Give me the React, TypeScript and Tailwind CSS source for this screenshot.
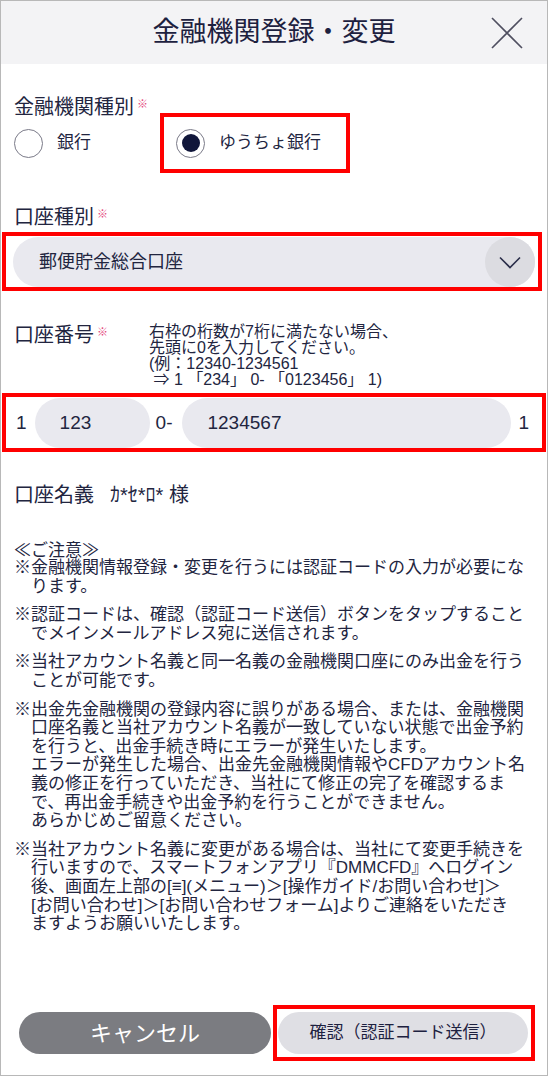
import React from 'react';

const textColor = 'text-[#22253f]';

const Required: React.FC = () => (
  <span className="ml-[3px] align-top text-[11px] leading-[14px] text-[#e4457c]">※</span>
);

const Radio: React.FC<{ checked?: boolean }> = ({ checked }) => (
  <span className="w-[29px] h-[29px] rounded-full border-[1.5px] border-[#7a7a88] bg-white flex items-center justify-center shrink-0">
    {checked && <span className="w-[18px] h-[18px] rounded-full bg-[#10163a]" />}
  </span>
);

const notes: string[][] = [
  ['※金融機関情報登録・変更を行うには認証コードの入力が必要にな', 'ります。'],
  ['※認証コードは、確認（認証コード送信）ボタンをタップすること', 'でメインメールアドレス宛に送信されます。'],
  ['※当社アカウント名義と同一名義の金融機関口座にのみ出金を行う', 'ことが可能です。'],
  [
    '※出金先金融機関の登録内容に誤りがある場合、または、金融機関',
    '口座名義と当社アカウント名義が一致していない状態で出金予約',
    'を行うと、出金手続き時にエラーが発生いたします。',
    'エラーが発生した場合、出金先金融機関情報やCFDアカウント名',
    '義の修正を行っていただき、当社にて修正の完了を確認するま',
    'で、再出金手続きや出金予約を行うことができません。',
    'あらかじめご留意ください。',
  ],
  [
    '※当社アカウント名義に変更がある場合は、当社にて変更手続きを',
    '行いますので、スマートフォンアプリ『DMMCFD』へログイン',
    '後、画面左上部の[≡](メニュー)＞[操作ガイド/お問い合わせ]＞',
    '[お問い合わせ]＞[お問い合わせフォーム]よりご連絡をいただき',
    'ますようお願いいたします。',
  ],
];

const App: React.FC = () => {
  return (
    <div
      className={`w-[548px] h-[1076px] border border-[#b8b8b8] bg-white flex flex-col font-['Liberation_Sans','Noto_Sans_CJK_JP',sans-serif] ${textColor}`}
    >
      {/* Header */}
      <div className="h-[63px] bg-[#f3f3f5] flex items-center justify-between shrink-0">
        <div className="w-[56px]" />
        <h1 className="text-[27px] leading-none text-[#1d213f]">金融機関登録・変更</h1>
        <div className="w-[56px] pr-[24px] flex justify-end">
          <svg width="32" height="32" viewBox="0 0 32 32" fill="none">
            <path d="M1 1 L31 31 M31 1 L1 31" stroke="#4f4f60" strokeWidth="1.6" />
          </svg>
        </div>
      </div>

      <div className="px-[13px] flex flex-col">
        {/* 金融機関種別 */}
        <div className="mt-[33px] text-[20px] leading-[20px]">
          金融機関種別<Required />
        </div>
        <div className="-mt-[4px] h-[60px] flex items-center">
          <div className="w-[146px] flex items-center">
            <Radio />
            <span className="ml-[14px] text-[17px]">銀行</span>
          </div>
          <div className="w-[190px] h-[60px] border-4 border-[#ff0000] flex items-center pl-[12px]">
            <Radio checked />
            <span className="ml-[14px] text-[17px]">ゆうちょ銀行</span>
          </div>
        </div>

        {/* 口座種別 */}
        <div className="mt-[34px] text-[20px] leading-[20px]">
          口座種別<Required />
        </div>
        <div className="mt-[5px] -ml-[12px] -mr-[8px] border-4 border-[#ff0000] pt-[1px] pl-[7px] pr-[3px]">
          <div className="h-[50px] rounded-full bg-[#e9e9ef] flex items-center justify-between pl-[26px]">
            <span className="text-[18px]">郵便貯金総合口座</span>
            <span className="w-[50px] h-[50px] rounded-full bg-[#dcdce1] flex items-center justify-center">
              <svg width="22" height="13" viewBox="0 0 22 13" fill="none">
                <path d="M1 1.5 L11 11.5 L21 1.5" stroke="#2b2e4a" strokeWidth="1.6" />
              </svg>
            </span>
          </div>
        </div>

        {/* 口座番号 */}
        <div className="mt-[33px] flex">
          <div className="w-[135px] mt-[1px] text-[20px] leading-[20px]">
            口座番号<Required />
          </div>
          <div className="text-[16px] leading-[16px] whitespace-nowrap">
            右枠の桁数が7桁に満たない場合、
            <br />
            先頭に0を入力してください。
            <br />
            (例：12340-1234561
            <br />
            &nbsp;⇒ 1 「234」 0- 「0123456」 1)
          </div>
        </div>
        <div className="mt-[5px] -mx-[12px] border-4 border-[#ff0000]">
          <div className="h-[50px] mt-[1px] flex items-center pl-[10px] text-[19px]">
            <span>1</span>
            <div className="ml-[8px] w-[115px] h-[50px] rounded-full bg-[#e9e9ef] flex items-center pl-[25px]">
              123
            </div>
            <span className="ml-[6px]">0-</span>
            <div className="ml-[10px] w-[329px] h-[50px] rounded-full bg-[#e9e9ef] flex items-center pl-[25px]">
              1234567
            </div>
            <span className="ml-[7px]">1</span>
          </div>
        </div>

        {/* 口座名義 */}
        <div className="mt-[33px] text-[20px] leading-[20px] flex items-center">
          <span>口座名義</span>
          <span className="ml-[16px]">ｶ*ｾ*ﾛ* 様</span>
        </div>

        {/* ご注意 */}
        <div className="mt-[38px] text-[17px]">
          <div className="leading-[16px]">≪ご注意≫</div>
          {notes.map((lines, i) => (
            <p
              key={i}
              className={`leading-[18.6px] pl-[17px] -indent-[17px] whitespace-nowrap ${i === 0 ? '' : 'mt-[10px]'}`}
            >
              {lines.map((line, j) => (
                <React.Fragment key={j}>
                  {j > 0 && <br />}
                  {line}
                </React.Fragment>
              ))}
            </p>
          ))}
        </div>
      </div>

      {/* Footer buttons */}
      <div className="mt-auto flex items-center pl-[18px] pb-[14px]">
        <button className="w-[252px] h-[42px] rounded-full bg-[#7b7c81] text-white text-[22px] flex items-center justify-center">
          キャンセル
        </button>
        <div className="ml-[2px] w-[262px] h-[56px] border-4 border-[#ff0000] pt-[3px] pl-[1px]">
          <button className="w-[250px] h-[42px] rounded-full bg-[#dfdfe4] text-[17px] text-[#1d213f] flex items-center justify-center">
            確認（認証コード送信）
          </button>
        </div>
      </div>
    </div>
  );
};

export default App;
